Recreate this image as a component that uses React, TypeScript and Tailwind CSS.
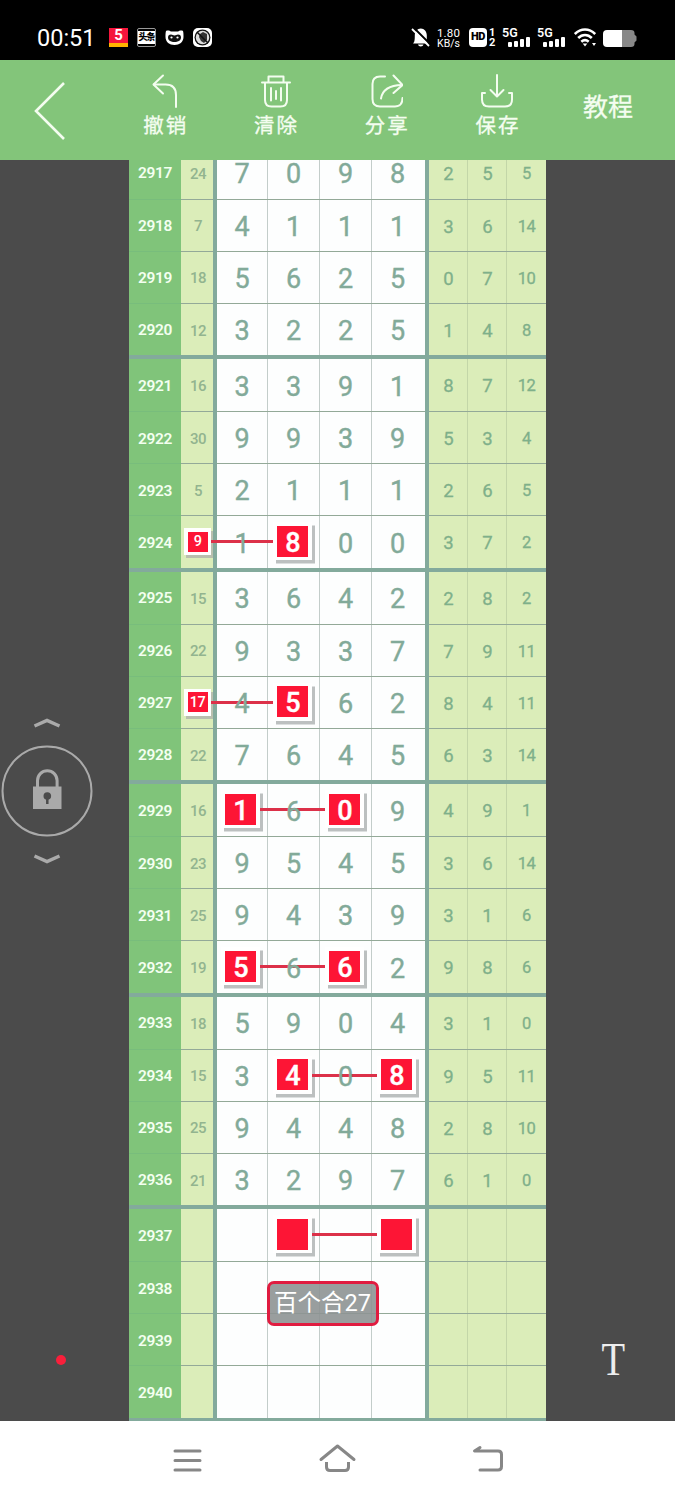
import { clsx } from "clsx"

type Row = {
    id: number
    sum?: number
    digits?: number[]
    tail?: number[]
    marks?: number[]
    note?: string
}

// marks are column indexes, -1 is the sum column
const groups: Row[][] = [
    [
        { id: 2917, sum: 24, digits: [7, 0, 9, 8], tail: [2, 5, 5] },
        { id: 2918, sum: 7, digits: [4, 1, 1, 1], tail: [3, 6, 14] },
        { id: 2919, sum: 18, digits: [5, 6, 2, 5], tail: [0, 7, 10] },
        { id: 2920, sum: 12, digits: [3, 2, 2, 5], tail: [1, 4, 8] },
    ],
    [
        { id: 2921, sum: 16, digits: [3, 3, 9, 1], tail: [8, 7, 12] },
        { id: 2922, sum: 30, digits: [9, 9, 3, 9], tail: [5, 3, 4] },
        { id: 2923, sum: 5, digits: [2, 1, 1, 1], tail: [2, 6, 5] },
        { id: 2924, sum: 9, digits: [1, 8, 0, 0], tail: [3, 7, 2], marks: [-1, 1] },
    ],
    [
        { id: 2925, sum: 15, digits: [3, 6, 4, 2], tail: [2, 8, 2] },
        { id: 2926, sum: 22, digits: [9, 3, 3, 7], tail: [7, 9, 11] },
        { id: 2927, sum: 17, digits: [4, 5, 6, 2], tail: [8, 4, 11], marks: [-1, 1] },
        { id: 2928, sum: 22, digits: [7, 6, 4, 5], tail: [6, 3, 14] },
    ],
    [
        { id: 2929, sum: 16, digits: [1, 6, 0, 9], tail: [4, 9, 1], marks: [0, 2] },
        { id: 2930, sum: 23, digits: [9, 5, 4, 5], tail: [3, 6, 14] },
        { id: 2931, sum: 25, digits: [9, 4, 3, 9], tail: [3, 1, 6] },
        { id: 2932, sum: 19, digits: [5, 6, 6, 2], tail: [9, 8, 6], marks: [0, 2] },
    ],
    [
        { id: 2933, sum: 18, digits: [5, 9, 0, 4], tail: [3, 1, 0] },
        { id: 2934, sum: 15, digits: [3, 4, 0, 8], tail: [9, 5, 11], marks: [1, 3] },
        { id: 2935, sum: 25, digits: [9, 4, 4, 8], tail: [2, 8, 10] },
        { id: 2936, sum: 21, digits: [3, 2, 9, 7], tail: [6, 1, 0] },
    ],
    [
        { id: 2937, marks: [1, 3] },
        { id: 2938, note: "百个合27" },
        { id: 2939 },
        { id: 2940 },
    ],
]

const StatusBar = () => (
    <div className="flex h-[60px] shrink-0 items-start bg-black pl-[37px] pt-[28px] text-white">
        <span className="mt-[-3px] w-[72px] text-[23.5px] leading-[26px]">00:51</span>
        <div className="flex gap-[9px]">
            <div className="flex h-[19px] w-[19px] flex-col bg-[#f5163c]">
                <span className="h-[14px] text-center text-[15px] font-bold leading-[14px]">5</span>
                <span className="mt-auto h-[4px] bg-[#ffb400]" />
            </div>
            <div className="flex h-[19px] w-[19px] flex-col justify-center rounded-[2px] border border-[#999]">
                <span className="whitespace-nowrap bg-white text-center text-[9px] font-black leading-[13px] tracking-[-1px] text-black">头条</span>
            </div>
            <svg width="19" height="19" viewBox="0 0 19 19">
                <path d="M1 3c2-1 4 0 5 .5h7C14 3 16 2 18 3c.5 2 .5 3 .5 6 0 5-4 8-9 8s-9-3-9-8c0-3 0-4 .5-6z" fill="#fff" />
                <path d="M3 9.500c0-2 1-3 3-3 1.500 0 2 1 3.500 1s2-1 3.500-1c2 0 3 1 3 3 0 3-3 4.500-6.500 4.500S3 12.500 3 9.500z" fill="#111" />
                <circle cx="6.500" cy="9.500" r="1.100" fill="#fff" />
                <circle cx="12.500" cy="9.500" r="1.100" fill="#fff" />
            </svg>
            <svg width="19" height="19" viewBox="0 0 19 19">
                <rect width="19" height="19" rx="5" fill="#fff" />
                <circle cx="9.500" cy="9.500" r="8" fill="#111" />
                <circle cx="9.500" cy="9.500" r="6.700" fill="#ddd" />
                <path d="M7 6l3-2 4 2v6l-3 3-3-2-2-4z" fill="#333" />
                <path d="M4 4l11 11" stroke="#111" strokeWidth="1.500" />
            </svg>
        </div>
        <svg className="ml-[199px]" width="20" height="19" viewBox="0 0 20 19">
            <path d="M2 15.500h15.500C16 14 15.800 12.500 15.800 7.500c0-4-2.500-7-6-7s-6 3-6 7c0 5-.3 6.500-1.800 8zM7 16.500h5.500c-.5 2.500-5 2.500-5.500 0z" fill="#fff" />
            <path d="M2.500-.5l17 17" stroke="#000" strokeWidth="2" />
            <path d="M1 1l17 17" stroke="#fff" strokeWidth="1.800" />
        </svg>
        <div className="ml-[4px] flex w-[27px] flex-col items-center text-[11px] leading-[10px]">
            <span className="text-[11.500px] tracking-[0.2px]">1.80</span>
            <span className="text-[10.500px] leading-[11px]">KB/s</span>
        </div>
        <div className="ml-[7px] flex h-[19px] w-[18px] items-center justify-center rounded-[4px] bg-white text-[11px] font-black tracking-[-0.5px] text-black">HD</div>
        <div className="ml-[2px] flex w-[6px] flex-col text-[11px] font-bold leading-[10px]">
            <span>1</span>
            <span>2</span>
        </div>
        <Signal className="ml-[7px]" />
        <Signal className="ml-[7px]" />
        <svg className="ml-[9px]" width="22" height="19" viewBox="0 0 22 19" fill="none" stroke="#fff" strokeWidth="2.600">
            <path d="M.8 6c6-6 14.400-6 20.400 0" />
            <path d="M4.200 10c4-4 9.600-4 13.600 0" />
            <path d="M7.300 13.700c2.300-2 5.100-2 7.400 0" />
            <path d="M8.700 15.500h4.600L11 18.500z" fill="#fff" stroke="none" />
            <path d="M18 15h4l-2 3z" fill="#fff" stroke="none" />
        </svg>
        <svg className="ml-[7px] mt-[2px]" width="34" height="17" viewBox="0 0 34 17">
            <path d="M18 0h10q3.500 0 3.500 3v1.500l2 2v4l-2 2V14q0 3-3.500 3H18z" fill="#888" />
            <path d="M4 0h15v17H4q-4 0-4-4V4q0-4 4-4z" fill="#fff" />
        </svg>
    </div>
)

const Signal = ({ className }: { className: string }) => (
    <div className={clsx("relative h-[19px] w-[28px]", className)}>
        <span className="block text-[12.500px] font-semibold leading-[10px]">5G</span>
        <div className="absolute bottom-0 right-0 flex items-end gap-[2px]">
            <span className="h-[5px] w-[4px] rounded-[1px] bg-white" />
            <span className="h-[6px] w-[4px] rounded-[1px] bg-white" />
            <span className="h-[8px] w-[4px] rounded-[1px] bg-white" />
            <span className="h-[10px] w-[4px] rounded-[1px] bg-white" />
        </div>
    </div>
)

const tools = [
    { label: "撤销", paths: ["M14 1.500L4.500 10.500 14 19.500", "M5 10.500h11.500q10.500 0 10.500 10.500v12"] },
    { label: "清除", paths: ["M2 8.500h28", "M8.500 8V2.500h15V8", "M5 9v17q0 6.500 6.500 6.500h9q6.500 0 6.500-6.500V9", "M11 14v12.500M16 17v8M21 14v12.500"] },
    { label: "分享", paths: ["M14 2.500H9Q1.500 2.500 1.500 10v15q0 7.500 7.500 7.500h15q7.500 0 7.500-8.500", "M22.500 1.500l9 9.500-9 8", "M10 24.500Q12 11.500 31 11"] },
    { label: "保存", paths: ["M16 1v21", "M9.500 16l6.500 6.500 6.500-6.500", "M4 19H1v6.500q0 7 7 7h16q7 0 7-7V19h-3"] },
]

const Toolbar = () => (
    <div className="flex h-[100px] shrink-0 bg-[#83c57a] text-[#f4fdf0]">
        <button className="w-[110px] pl-[33px] pt-[2px]">
            <svg width="33" height="60" viewBox="0 0 33 60" fill="none" stroke="currentColor" strokeWidth="2.600">
                <path d="M31 2L3 30l28 28" />
            </svg>
        </button>
        {tools.map((tool) => (
            <button key={tool.label} className="flex w-[110.700px] flex-col items-center pt-[14px]">
                <svg width="32" height="34" viewBox="0 0 32 34" fill="none" stroke="currentColor" strokeWidth="2" strokeLinecap="round" strokeLinejoin="round">
                    {tool.paths.map((d) => <path key={d} d={d} />)}
                </svg>
                <span className="mt-[5px] pl-[1px] text-[20.500px] leading-[26px] tracking-[2px] [-webkit-text-stroke:0.3px]">{tool.label}</span>
            </button>
        ))}
        <button className="w-[110.700px] pb-[4px] text-[25px] [-webkit-text-stroke:0.3px]">教程</button>
    </div>
)

const Mark = ({ value, small, line }: { value?: number; small?: boolean; line?: boolean }) => (
    <div className={clsx(
        "absolute z-[5] flex items-center justify-center bg-white font-medium text-white",
        small
            ? "left-[3px] top-[12px] h-[27px] w-[27px] text-[14.500px] shadow-[2px_3px_0_#b9bfae]"
            : "left-[5px] top-[6px] h-[38px] w-[39px] text-[27px] shadow-[3px_3.500px_0_#bcc0c0]"
    )}>
        <span className={clsx("flex items-center justify-center bg-[#fd1535]", small ? "h-[20px] w-[20px] pt-[1px]" : "h-[31px] w-[31px] pl-[1px] pt-[4px]")}>
            {value}
        </span>
        {line && <i className={clsx("absolute left-full h-[3px] bg-[#dc3149]", small ? "top-[12px] w-[62px]" : "top-[18px] w-[66px]")} />}
    </div>
)

const TableRow = ({ row, first }: { row: Row; first: boolean }) => {
    const marks = row.marks ?? []
    const line = first ? "" : "border-t border-[#93a998]"
    return (
        <div className="grid h-[52.140px] grid-cols-[52px_32px_4px_51px_52px_52px_53px_4px_39px_39px_39px] leading-none text-[#82aa99]">
            <div className={clsx("flex items-center justify-center bg-[#80c47a] pt-[3px] text-[15.500px] font-semibold tracking-[-0.400px] text-[#f3fff0]", !first && "border-t border-[#78bd7c]")}>{row.id}</div>
            <div className={clsx("relative flex items-center justify-center bg-[#dbedb9] pl-[2px] pt-[3px] text-[15px] font-medium tracking-[-0.500px] text-[#92b48f]", line)}>
                {!marks.includes(-1) && row.sum}
                {marks.includes(-1) && <Mark value={row.sum} small line />}
            </div>
            <div className="bg-[#83aa9c]" />
            {[0, 1, 2, 3].map((col) => (
                <div key={col} className={clsx("relative flex items-center justify-center bg-[#fdfefe] pt-[4px] text-[27px] [-webkit-text-stroke:0.4px]", line, col < 3 ? "pr-px" : "pr-[2px]")}>
                    {col < 3 && <i className="absolute inset-y-0 right-0 w-px bg-[#c3cdca]" />}
                    <span className="relative z-10">{!marks.includes(col) && row.digits?.[col]}</span>
                    {marks.includes(col) && (
                        <div className={clsx("absolute inset-0", col === 0 && "-left-px")}>
                            <Mark value={row.digits?.[col]} line={marks[0] === col} />
                        </div>
                    )}
                    {col === 1 && row.note && (
                        <div className="absolute left-[-1px] top-[19px] z-20 flex h-[45px] w-[112px] items-center justify-center whitespace-nowrap rounded-[7px] border-[3px] border-[#e01c40] bg-[#8e9493]/90 pr-px text-[23.500px] font-normal text-white [-webkit-text-stroke:0]">
                            {row.note}
                        </div>
                    )}
                </div>
            ))}
            <div className="bg-[#83aa9c]" />
            {[0, 1, 2].map((col) => (
                <div key={col} className={clsx("relative flex items-center justify-center bg-[#dbedb9] pt-[3px] text-[#7fb08a] [-webkit-text-stroke:0.3px]", line, col === 2 ? "text-[16.500px] tracking-[-0.500px]" : "text-[18.500px]")}>
                    {col < 2 && <i className="absolute inset-y-0 right-0 w-px bg-[#c3d6a8]" />}
                    {row.tail?.[col]}
                </div>
            ))}
        </div>
    )
}

const App = () => {
    return (
        <div className="flex h-[1500px] w-[675px] flex-col overflow-hidden bg-white font-['Roboto','Noto_Sans_CJK_SC',sans-serif]">
            <StatusBar />
            <Toolbar />
            <div className="flex h-[1261px] shrink-0 overflow-hidden bg-[#4b4b4b]">
                <div className="flex w-[129px] shrink-0 flex-col pt-[557px]">
                    <svg width="94" height="148" viewBox="0 0 94 148" fill="none" stroke="#aaa" strokeWidth="2">
                        <path d="M34.500 9L47 3.500 59.500 9M34.500 139l12.500 5.500 12.500-5.500" strokeWidth="3.500" />
                        <circle cx="47" cy="74" r="44.500" />
                        <path d="M37.500 72v-8.500a9.800 9.800 0 0 1 19.600 0V72" strokeWidth="3" />
                        <path d="M33 69.500h28.500V92H33z" fill="#aaa" stroke="none" />
                        <circle cx="47.300" cy="79" r="3.800" fill="#4b4b4b" stroke="none" />
                        <path d="M47.300 80v7" stroke="#4b4b4b" strokeWidth="2.500" />
                    </svg>
                    <span className="ml-[55.500px] mt-[490px] h-[10px] w-[10px] rounded-full bg-[#f91f3b]" />
                </div>
                <div className="-mt-[13.400px] w-[417px] shrink-0">
                    {groups.map((group) => (
                        <div key={group[0].id} className="border-b-4 border-[#83aa9c]">
                            {group.map((row, i) => <TableRow key={row.id} row={row} first={i === 0} />)}
                        </div>
                    ))}
                </div>
                <button className="ml-[3px] mt-[1169px] h-[60px] w-[129px] pl-[3px] scale-x-[0.820] font-['Liberation_Serif',serif] text-[47px] leading-[60px] text-[#eee]">T</button>
            </div>
            <div className="flex flex-1 pt-[22px]">
                <svg className="ml-[170px]" width="36" height="36" viewBox="0 0 36 36" stroke="#878787" strokeWidth="3" strokeLinecap="round">
                    <path d="M5 8h25M5 17.500h25M5 27h25" />
                </svg>
                <svg className="ml-[112px]" width="40" height="36" viewBox="0 0 40 36" fill="none" stroke="#878787" strokeWidth="3">
                    <path d="M3 16.500L19.500 3 36 16.500" strokeLinecap="round" strokeLinejoin="round" />
                    <path d="M8.500 19v5q0 3.500 3.500 3.500h15q3.500 0 3.500-3.500v-5" />
                </svg>
                <svg className="ml-[112px]" width="36" height="36" viewBox="0 0 36 36" fill="none" stroke="#878787" strokeWidth="3" strokeLinecap="round">
                    <path d="M10 4.500L4.500 8H28q3.500 0 3.500 3.500v12q0 3.500-3.500 3.500H10" strokeLinejoin="round" />
                </svg>
            </div>
        </div>
    )
}

export default App
